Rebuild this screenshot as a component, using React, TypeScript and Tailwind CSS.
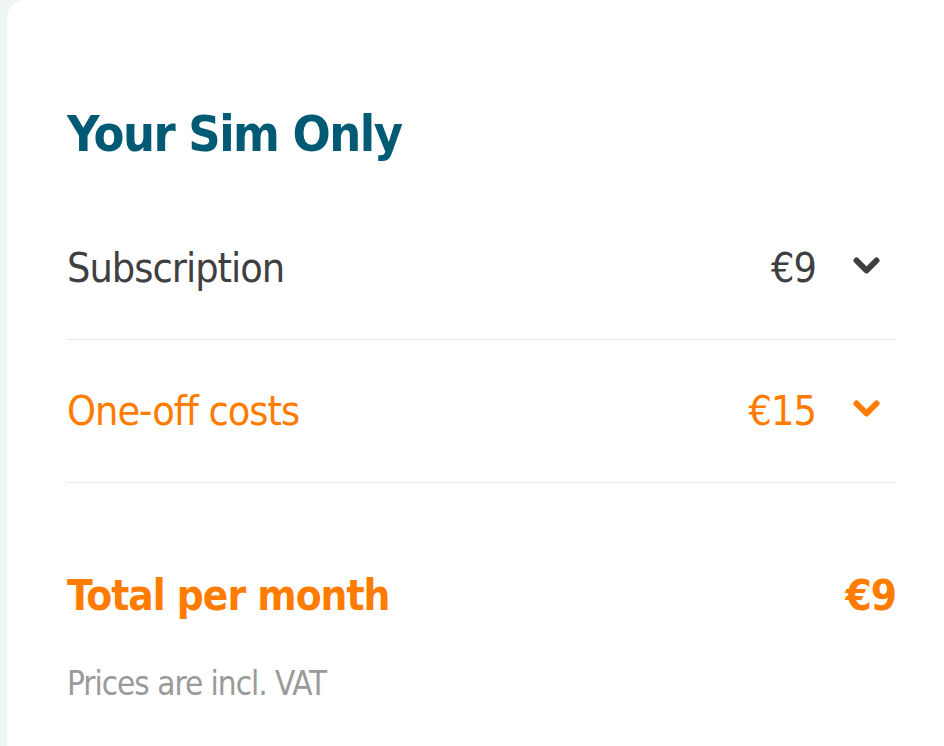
import React from "react";

const rows = [
  { label: "Subscription", price: "€9", tone: "text-[#3f3f42]" },
  { label: "One-off costs", price: "€15", tone: "text-[#ff7c00]" },
];

const Chevron = () => (
  <svg width="27" height="18" viewBox="0 0 27 18" className="mb-[5px]">
    <polyline
      points="3.5,3.5 13.5,13.5 23.5,3.5"
      fill="none"
      stroke="currentColor"
      strokeWidth="6"
      strokeLinecap="round"
      strokeLinejoin="round"
    />
  </svg>
);

export default function App() {
  return (
    <div
      className="min-h-[746px] bg-[#edf6f5] pl-[7px] font-stretch-condensed"
      style={{ fontFamily: '"DejaVu Sans Condensed", "DejaVu Sans", sans-serif' }}
    >
      <div className="min-h-[746px] rounded-tl-[18px] bg-white pl-[60px] pr-[48px]">
        <h1 className="pt-[109px] text-[50px] font-bold leading-none tracking-[-1.5px] text-[#005a74]">
          Your Sim Only
        </h1>

        <div className="mt-[38px]">
          {rows.map((row) => (
            <div
              key={row.label}
              className={`flex h-[143px] items-center justify-between border-b border-[#e3eeee] ${row.tone}`}
            >
              <span className="text-[41px] leading-none tracking-[-1px]">{row.label}</span>
              <div className="flex items-center">
                <span className="text-[41px] leading-none tracking-[-1px]">{row.price}</span>
                <span className="ml-[37px] mr-[16px] flex">
                  <Chevron />
                </span>
              </div>
            </div>
          ))}
        </div>

        <div className="mt-[92px] flex items-center justify-between text-[42px] font-bold leading-none tracking-[-1px] text-[#ff7c00]">
          <span>Total per month</span>
          <span>€9</span>
        </div>

        <p className="mt-[50px] text-[33px] leading-none tracking-[-1px] text-[#9a9a9a]">Prices are incl. VAT</p>
      </div>
    </div>
  );
}
